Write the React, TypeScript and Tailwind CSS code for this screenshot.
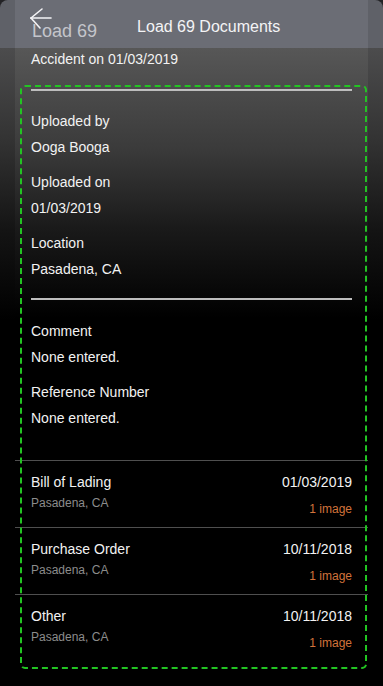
import React from 'react';

interface DetailField {
  label: string;
  value: string;
}

interface DocumentRow {
  title: string;
  location: string;
  date: string;
  images: number;
}

const uploadFields: DetailField[] = [
  { label: 'Uploaded by', value: 'Ooga Booga' },
  { label: 'Uploaded on', value: '01/03/2019' },
  { label: 'Location', value: 'Pasadena, CA' },
];

const noteFields: DetailField[] = [
  { label: 'Comment', value: 'None entered.' },
  { label: 'Reference Number', value: 'None entered.' },
];

const documents: DocumentRow[] = [
  { title: 'Bill of Lading', location: 'Pasadena, CA', date: '01/03/2019', images: 1 },
  { title: 'Purchase Order', location: 'Pasadena, CA', date: '10/11/2018', images: 1 },
  { title: 'Other', location: 'Pasadena, CA', date: '10/11/2018', images: 1 },
];

function BackArrow() {
  return (
    <svg
      className="absolute left-[-3px] top-[-14px]"
      width="24"
      height="24"
      viewBox="0 0 24 24"
      fill="none"
      stroke="#f4f4f6"
      strokeWidth="1.6"
      strokeLinecap="round"
      strokeLinejoin="round"
    >
      <path d="M2 11 L13 2" />
      <path d="M2 11 L11 21" />
      <path d="M2 11 H22" />
    </svg>
  );
}

function Field({ label, value }: DetailField) {
  return (
    <div className="mb-[9px] last:mb-0">
      <div className="h-[26px] leading-[26px] text-[14px] text-[#f2f2f2]">{label}</div>
      <div className="h-[26px] leading-[26px] text-[14px] text-[#f2f2f2]">{value}</div>
    </div>
  );
}

function DocumentItem({ title, location, date, images }: DocumentRow) {
  return (
    <div className="flex justify-between border-t border-[#4f4f4f] px-[16px] pt-[11px] h-[67px]">
      <div>
        <div className="leading-[20px] text-[14px] text-[#f2f2f2]">{title}</div>
        <div className="mt-[3px] leading-[16px] text-[12px] text-[#8c8c8c]">{location}</div>
      </div>
      <div className="text-right">
        <div className="leading-[20px] text-[14px] text-[#f2f2f2]">{date}</div>
        <div className="mt-[9px] leading-[16px] text-[12px] text-[#d2733b]">
          {images} image{images === 1 ? '' : 's'}
        </div>
      </div>
    </div>
  );
}

export default function App() {
  return (
    <div
      className="relative w-[383px] h-[686px] overflow-hidden bg-[#232326]"
      style={{ fontFamily: '"Liberation Sans", Arial, sans-serif' }}
    >
      <div className="h-full rounded-t-[8px] overflow-hidden px-[15px] bg-[linear-gradient(to_bottom,#5f6168_0px,#5f6168_48px,#4c4c4d_48px,#333_140px,#141414_230px,#000_320px)]">
        <div className="flex h-full flex-col bg-[linear-gradient(to_bottom,#6b6d75_0px,#6b6d75_48px,#575757_48px,#3b3b3b_148px,#1a1a1a_228px,#000_318px)]">
          {/* Nav bar */}
          <div className="flex h-[48px] shrink-0 items-center pl-[17px]">
            <div className="relative mt-[13px] text-[18px] leading-[20px] text-[#c4c5cb]">
              Load 69
              <BackArrow />
            </div>
            <div className="ml-[40px] mt-[5px] text-[16px] leading-[20px] text-[#f4f4f6]">
              Load 69 Documents
            </div>
          </div>

          <div className="px-[16px] pt-[1px] text-[14px] leading-[20px] text-[#f2f2f2]">
            Accident on 01/03/2019
          </div>

          {/* Details */}
          <div className="px-[16px]">
            <div className="mt-[20px] h-[2px] bg-[#bdbdbd]" />
            <div className="pt-[17px] pb-[16px]">
              {uploadFields.map((f) => (
                <Field key={f.label} {...f} />
              ))}
            </div>
            <div className="h-[2px] bg-[#bdbdbd]" />
            <div className="pt-[18px] pb-[29px]">
              {noteFields.map((f) => (
                <Field key={f.label} {...f} />
              ))}
            </div>
          </div>

          {/* Documents */}
          <div>
            {documents.map((d) => (
              <DocumentItem key={d.title} {...d} />
            ))}
          </div>
        </div>
      </div>

      {/* Selection outline */}
      <div className="pointer-events-none absolute left-[20px] top-[85px] h-[584px] w-[347px] rounded-[5px] border-2 border-dashed border-[#22c422]" />
    </div>
  );
}
